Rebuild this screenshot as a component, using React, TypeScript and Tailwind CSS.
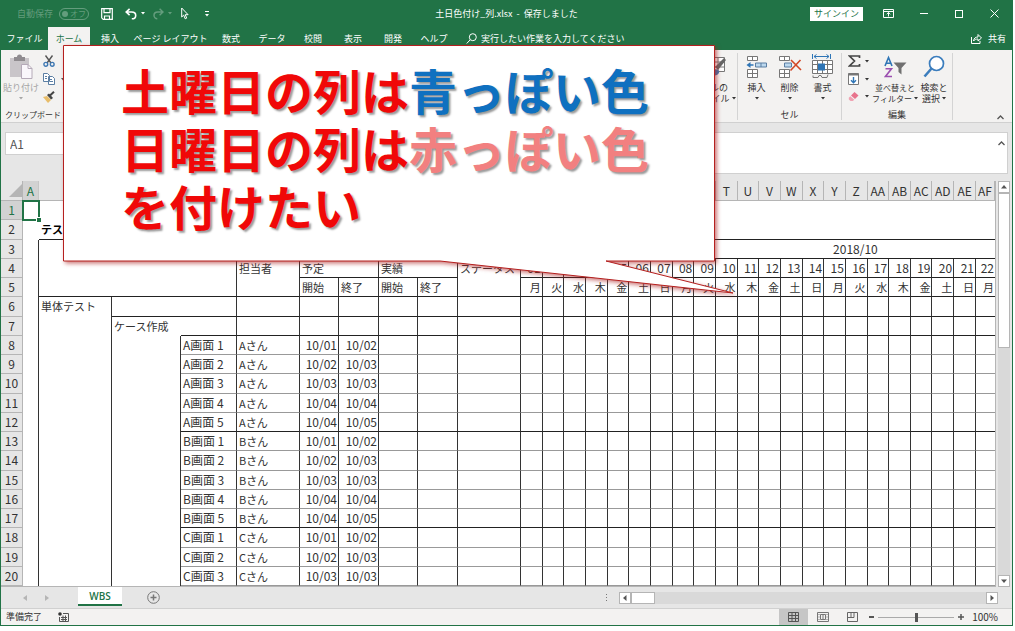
import React from 'react';

const days = Array.from({ length: 22 }, (_, i) => String(i + 1).padStart(2, '0'));
const weekdays = ['月', '火', '水', '木', '金', '土', '日'];
const columnNames = [
  'A', 'B', 'C', 'D', 'E', 'F', 'G', 'H', 'I', 'J', 'K', 'L', 'M', 'N', 'O', 'P',
  'Q', 'R', 'S', 'T', 'U', 'V', 'W', 'X', 'Y', 'Z', 'AA', 'AB', 'AC', 'AD', 'AE', 'AF',
];
// B to S lie behind the speech bubble
const isCovered = (index: number) => index > 0 && index < 19;

const tasks = [
  { name: 'A画面 1', owner: 'Aさん', start: '10/01', end: '10/02' },
  { name: 'A画面 2', owner: 'Aさん', start: '10/02', end: '10/03' },
  { name: 'A画面 3', owner: 'Aさん', start: '10/03', end: '10/03' },
  { name: 'A画面 4', owner: 'Aさん', start: '10/04', end: '10/04' },
  { name: 'A画面 5', owner: 'Aさん', start: '10/04', end: '10/05' },
  { name: 'B画面 1', owner: 'Bさん', start: '10/01', end: '10/02' },
  { name: 'B画面 2', owner: 'Bさん', start: '10/02', end: '10/03' },
  { name: 'B画面 3', owner: 'Bさん', start: '10/03', end: '10/03' },
  { name: 'B画面 4', owner: 'Bさん', start: '10/04', end: '10/04' },
  { name: 'B画面 5', owner: 'Bさん', start: '10/04', end: '10/05' },
  { name: 'C画面 1', owner: 'Cさん', start: '10/01', end: '10/02' },
  { name: 'C画面 2', owner: 'Cさん', start: '10/02', end: '10/03' },
  { name: 'C画面 3', owner: 'Cさん', start: '10/03', end: '10/03' },
];

const tabs = [
  { label: 'ファイル', width: 'w-[47px]' },
  { label: 'ホーム', width: 'w-[42px]', active: true },
  { label: '挿入', width: 'w-[40px]' },
  { label: 'ページ レイアウト', width: 'w-[81px]' },
  { label: '数式', width: 'w-[40px]' },
  { label: 'データ', width: 'w-[42px]' },
  { label: '校閲', width: 'w-[40px]' },
  { label: '表示', width: 'w-[40px]' },
  { label: '開発', width: 'w-[40px]' },
  { label: 'ヘルプ', width: 'w-[42px]' },
];

const Caret: React.FC<{ className?: string }> = ({ className = '' }) => (
  <svg width="4" height="3" viewBox="0 0 4 3" className={`shrink-0 ${className}`} fill="currentColor">
    <path d="M0 0h4L2 2.500z" />
  </svg>
);

const TitleBar: React.FC = () => (
  <header className="flex h-[27px] shrink-0 items-center text-white">
    <div className="flex flex-1 items-center">
      <label className="ml-4 flex items-center gap-1.5 text-white/30">
        自動保存
        <button type="button" role="switch" aria-checked="false" className="flex h-3 w-[30px] shrink-0 items-center gap-0.5 rounded-full border border-white/30 pl-0.5 text-[8px] leading-none whitespace-nowrap">
          <span className="size-1.5 shrink-0 rounded-full bg-white/30" />
          オフ
        </button>
      </label>
      <button type="button" aria-label="上書き保存" className="ml-3">
        <svg width="12" height="12" viewBox="0 0 12 12" fill="none" stroke="white" strokeWidth="1.2">
          <path d="M.7.7h10.6v10.6H2.2L.7 9.8z" />
          <path d="M3 .7v4h6v-4M3.5 11.3V8h5v3.3" />
        </svg>
      </button>
      <button type="button" aria-label="元に戻す" className="ml-3 flex items-center gap-1">
        <svg width="12" height="12" viewBox="0 0 12 12" fill="none" stroke="white" strokeWidth="1.6">
          <path d="M4.6.8L1.2 4l3.4 3.2M1.5 4h5.2c2.3 0 4 1.400 4 3.400S9 10.800 6.800 10.800" />
        </svg>
        <Caret />
      </button>
      <button type="button" aria-label="やり直し" className="ml-2 flex items-center gap-1 text-white/30">
        <svg width="11" height="12" viewBox="0 0 11 12" fill="none" stroke="currentColor" strokeWidth="1.5">
          <path d="M6.600.8L10 4 6.600 7.200M9.500 4H4.800C2.500 4 1 5.500 1 7.300s1.500 3.500 3.300 3.500" />
        </svg>
        <Caret />
      </button>
      <button type="button" aria-label="オブジェクトの選択" className="ml-[9px]">
        <svg width="8" height="13" viewBox="0 0 8 13" fill="none" stroke="white">
          <path d="M.7 1v9l2-1.900 1.500 3.700 1.500-.7-1.500-3.400h2.900z" />
        </svg>
      </button>
      <button type="button" aria-label="クイック アクセス ツール バーのユーザー設定" className="ml-4 flex flex-col items-center gap-0.5">
        <span className="h-px w-1 bg-white" />
        <Caret />
      </button>
    </div>
    <h1 className="text-[9px]">土日色付け_列.xlsx&nbsp; -&nbsp; 保存しました</h1>
    <div className="flex flex-1 items-center justify-end">
      <button type="button" className="h-3.5 w-[53px] bg-white text-center text-[#217346]">サインイン</button>
      <button type="button" aria-label="リボンの表示オプション" className="ml-5">
        <svg width="11" height="9" viewBox="0 0 11 9" fill="none" stroke="white">
          <path d="M.5.5h10v8H.5zM.5 2.500h10M5.500 7.500v-4M3.700 5.200l1.800-1.700 1.800 1.700" />
        </svg>
      </button>
      <button type="button" aria-label="最小化" className="ml-[26px] h-px w-2 bg-white" />
      <button type="button" aria-label="最大化" className="ml-[27px] size-2 border border-white" />
      <button type="button" aria-label="閉じる" className="mr-[13px] ml-[27px]">
        <svg width="9" height="9" viewBox="0 0 9 9" stroke="white">
          <path d="M.5.5l8 8M8.500.5l-8 8" />
        </svg>
      </button>
    </div>
  </header>
);

const TabRow: React.FC = () => (
  <nav className="flex h-[23px] shrink-0 items-stretch text-white">
    {tabs.map((tab) => (
      <button
        key={tab.label}
        type="button"
        className={`${tab.width} shrink-0 whitespace-nowrap ${tab.active ? 'bg-[#f3f2f1] text-[#217346]' : ''}`}
      >
        {tab.label}
      </button>
    ))}
    <button type="button" className="ml-[11px] flex items-center gap-1">
      <svg width="11" height="11" viewBox="0 0 11 11" fill="none" stroke="white">
        <circle cx="6.800" cy="4.200" r="3.500" />
        <path d="M4.200 6.800L.7 10.500" />
      </svg>
      実行したい作業を入力してください
    </button>
    <button type="button" className="mr-1.5 ml-auto flex items-center gap-1.5">
      <svg width="11" height="11" viewBox="0 0 11 11" fill="none" stroke="white">
        <path d="M.5 4v6.500h8.500V8M2.500 8c.3-2.700 2-4 4.500-4V1.500l3.500 3.500L7 8V6C5 6 3.500 6.500 2.500 8z" />
      </svg>
      共有
    </button>
  </nav>
);

const RibbonButton: React.FC<{ lines: string[]; className: string; children: React.ReactNode }> = ({ lines, className, children }) => (
  <button type="button" className={`flex shrink-0 flex-col items-center whitespace-nowrap leading-[11px] ${className}`}>
    <span className="mb-0.5 flex h-[27px] items-center">{children}</span>
    <span>{lines[0]}</span>
    <span className="flex h-[11px] items-center gap-0.5">
      {lines[1]}
      <Caret />
    </span>
  </button>
);

const Ribbon: React.FC = () => (
  <section className="flex h-[73px] shrink-0 border-b border-[#d0d0d0] bg-[#f3f2f1] pt-[3px] pb-0.5">
    <div className="flex w-[130px] shrink-0 flex-col justify-between">
      <div className="flex">
        <RibbonButton lines={['貼り付け', '']} className="w-10 text-[#a6a6a6]">
          <svg width="24" height="26" viewBox="0 0 24 26">
            <path d="M1 4h19v19H1z" fill="#c9c5c9" />
            <path d="M5 3h3a2.500 2.500 0 015 0h3v4H5z" fill="#8f8b8f" />
            <path d="M12.500 10.500h6.500l4 4v10H12.500z" fill="#faf7fb" stroke="#b5aab8" />
            <path d="M19 10.500v4h4" fill="none" stroke="#b5aab8" />
          </svg>
        </RibbonButton>
        <div className="ml-0.5 flex flex-col gap-1.5 pt-0.5">
          <button type="button" aria-label="切り取り">
            <svg width="12" height="12" viewBox="0 0 12 12" fill="none" strokeWidth="1.400">
              <path d="M2.500.5L8 8M9.500.5L4 8" stroke="#555" />
              <circle cx="2.800" cy="9.300" r="1.900" stroke="#3e78b3" />
              <circle cx="9.200" cy="9.300" r="1.900" stroke="#3e78b3" />
            </svg>
          </button>
          <button type="button" aria-label="コピー" className="flex items-center gap-1.5 text-[#555]">
            <svg width="12" height="12" viewBox="0 0 12 12" fill="#fff" stroke="#5b7ea3">
              <path d="M.5.5h4l2 2v6h-6zM5.500 3.500h4l2 2v6h-6z" />
              <path d="M2 3.500h2M2 5.500h2M7 6.500h2M7 8.500h3" />
            </svg>
            <Caret />
          </button>
          <button type="button" aria-label="書式のコピー/貼り付け">
            <svg width="12" height="12" viewBox="0 0 12 12">
              <path d="M0 6l4-1 4 4-3 3z" fill="#e8bd6a" />
              <path d="M4 4l2-1.500L10 7 8 8.500z" fill="#444" />
              <path d="M7 4.500L11 .8" stroke="#444" strokeWidth="2" />
            </svg>
          </button>
        </div>
      </div>
      <span className="pl-1 text-[8px] leading-[11px]">クリップボード</span>
    </div>

    <div className="flex-1" />

    <div className="flex w-[46px] shrink-0 justify-center border-r border-[#d4d4d4]">
      <RibbonButton lines={['セルの', 'スタイル']} className="w-[46px]">
        <svg width="24" height="24" viewBox="0 0 24 24">
          <path d="M1.500 2.500h20v14h-20zM1.500 7h20M1.500 12h20M8 2.500v14M15 2.500v14" fill="#fff" stroke="#777" />
          <path d="M12 12l9-9 2 2-8 10z" fill="#666" />
          <path d="M9 21c0-5 3-8 6-6s0 6-6 6z" fill="#3e78b3" />
        </svg>
      </RibbonButton>
    </div>

    <div className="flex w-[104px] shrink-0 flex-col justify-between border-r border-[#d4d4d4]">
      <div className="flex justify-center">
        <RibbonButton lines={['挿入', '']} className="w-[33px]">
          <svg width="22" height="24" viewBox="0 0 22 24" fill="#fff" stroke="#777">
            <path d="M1.500 1.500h10v4h-10zM6.500 1.500v4M1.500 14.500h10v8h-10zM1.500 18.500h10M6.500 14.500v8" />
            <path d="M9.500 8h11v4h-11zM15 8v4" fill="#bcd8ee" stroke="#5b7ea3" />
            <path d="M7.500 10H2" stroke="#2e75b6" strokeWidth="1.500" />
            <path d="M4.500 7v6L.5 10z" fill="#2e75b6" stroke="none" />
          </svg>
        </RibbonButton>
        <RibbonButton lines={['削除', '']} className="w-[33px]">
          <svg width="24" height="24" viewBox="0 0 24 24" fill="#fff" stroke="#777">
            <path d="M1.500 1.500h10v4h-10zM6.500 1.500v4M1.500 14.500h10v8h-10zM1.500 18.500h10M6.500 14.500v8" />
            <path d="M6.500 8h7v4h-7z" fill="#bcd8ee" stroke="#5b7ea3" />
            <path d="M13 5l10 10M22.500 5L12.500 15.500" stroke="#d24726" strokeWidth="1.600" />
          </svg>
        </RibbonButton>
        <RibbonButton lines={['書式', '']} className="w-[33px]">
          <svg width="23" height="25" viewBox="0 0 23 25" fill="none" stroke="#777">
            <path d="M1.500 6.500h20v13h-20zM1.500 10.500h20M1.500 15.500h20M6.500 6.500v13M11.500 6.500v13M16.500 6.500v13" fill="#fff" />
            <path d="M7 9.500h7v7H7z" fill="#2e75b6" stroke="none" />
            <path d="M2 21.500v2h5l1-2h2l1 2h5l1-3" />
            <path d="M1.500 0v5M19.500 0v5M3 2.500h15" stroke="#2e75b6" />
            <path d="M5.500.5L3 2.500l2.500 2M15.500.5l2.500 2-2.500 2" stroke="#2e75b6" />
          </svg>
        </RibbonButton>
      </div>
      <span className="text-center leading-[11px]">セル</span>
    </div>

    <div className="flex w-[111px] shrink-0 flex-col justify-between border-r border-[#d4d4d4]">
      <div className="flex pl-1.5">
        <div className="flex w-[22px] shrink-0 flex-col gap-1.5 pt-0.5">
          <button type="button" aria-label="オート SUM" className="flex items-center gap-1">
            <svg width="13" height="12" viewBox="0 0 13 12" fill="none" stroke="#444" strokeWidth="1.700">
              <path d="M11.500 3V1H1.500l5 5-5 5h10V9" />
            </svg>
            <Caret />
          </button>
          <button type="button" aria-label="フィル" className="flex items-center gap-1.5">
            <svg width="11" height="12" viewBox="0 0 11 12" fill="#fff" stroke="#777">
              <path d="M.5.5h10v11H.5z" />
              <path d="M.5 1.500h10" strokeWidth="2" />
              <path d="M5.500 4v5.500M3 7.200l2.500 2.500L8 7.200" fill="none" stroke="#2e75b6" strokeWidth="1.400" />
            </svg>
            <Caret />
          </button>
          <button type="button" aria-label="クリア" className="flex items-center gap-1.5">
            <svg width="11" height="11" viewBox="0 0 11 11">
              <path d="M6.500 1L10.500 4.500 7 8 3 4.500z" fill="#e8738c" />
              <path d="M2.300 5.200l4 3.500L4.800 10H2.500L.8 8.500V6.700z" fill="#f0a3b3" />
            </svg>
            <Caret />
          </button>
        </div>
        <RibbonButton lines={['並べ替えと', 'フィルター']} className="w-[50px] text-[8px]">
          <svg width="23" height="24" viewBox="0 0 23 24" fill="none">
            <path d="M1 11L4.500 2.500 8 11M2.200 8.300h4.600" stroke="#2e75b6" strokeWidth="1.600" />
            <path d="M1.500 13.800h6L1.500 21.500h6.500" stroke="#9b4fb0" strokeWidth="1.600" />
            <path d="M9.500 7.500H22.500L17.500 13v6.500L14.500 17v-4z" fill="#707070" />
          </svg>
        </RibbonButton>
        <RibbonButton lines={['検索と', '選択']} className="w-[28px]">
          <svg width="22" height="24" viewBox="0 0 22 24" fill="#fff" stroke="#3b7dbd">
            <circle cx="13.500" cy="8.500" r="7" strokeWidth="1.700" />
            <path d="M8.500 13.500L1.500 21.500" strokeWidth="2.600" />
          </svg>
        </RibbonButton>
      </div>
      <span className="text-center leading-[11px]">編集</span>
    </div>

    <div className="flex w-[59px] shrink-0 items-end justify-end pr-2">
      <button type="button" aria-label="リボンを折りたたむ">
        <svg width="7" height="5" viewBox="0 0 7 5" fill="none" stroke="#555" strokeWidth="1.300">
          <path d="M.5 4l3-3 3 3" />
        </svg>
      </button>
    </div>
  </section>
);

const FormulaBar: React.FC = () => (
  <div className="flex shrink-0 items-start gap-2 pt-[9px] pr-1 pb-[7px] pl-1">
    <input
      aria-label="名前ボックス"
      defaultValue="A1"
      className="h-[23px] w-[110px] border border-[#d0d0d0] bg-white px-1 text-[12px] text-[#555]"
    />
    <div className="flex h-[42px] flex-1 items-start border border-[#d0d0d0] bg-white">
      <input aria-label="数式バー" className="h-5 flex-1 bg-transparent px-1" />
      <button type="button" aria-label="数式バーの展開" className="mt-2 mr-0.5">
        <svg width="7" height="5" viewBox="0 0 7 5" fill="none" stroke="#555" strokeWidth="1.300">
          <path d="M.5 4l3-3 3 3" />
        </svg>
      </button>
    </div>
  </div>
);

const line = 'border-r border-[#333]';
const solid = 'border-b border-b-[#222]';
const hair = 'border-b border-b-[#999]';

const RowHead: React.FC<{ n: number }> = ({ n }) => (
  <th
    scope="row"
    className={`border-r border-b border-[#b5b5b5] text-center text-[12px] font-normal ${n === 1 ? 'bg-[#d2d2d2] text-[#217346]' : 'bg-[#e6e6e6]'}`}
  >
    {n}
  </th>
);

const EmptyCells: React.FC<{ count: number; className: string }> = ({ count, className }) => (
  <>
    {Array.from({ length: count }, (_, i) => (
      <td key={i} className={className} />
    ))}
  </>
);

const Sheet: React.FC = () => (
  <div className="min-w-0 flex-1 overflow-hidden border-r border-b border-[#b5b5b5]">
    <table className="h-full w-full table-fixed border-separate border-spacing-0 bg-white text-[11px] leading-4 whitespace-nowrap text-[#333]">
      <colgroup>
        <col className="w-[22px]" />
        <col className="w-[16px]" />
        <col className="w-[73px]" />
        <col className="w-[69px]" />
        <col className="w-[56px]" />
        <col className="w-[63px]" />
        <col className="w-[39px]" />
        <col className="w-[40px]" />
        <col className="w-[39px]" />
        <col className="w-[40px]" />
        <col className="w-[63px]" />
        {days.slice(1).map((day) => (
          <col key={day} />
        ))}
        <col className="w-[19px]" />
      </colgroup>
      <thead>
        <tr className="bg-[#e6e6e6] text-[12px]">
          <th className="h-5 border-r border-b border-[#b5b5b5]">
            <svg width="13" height="13" viewBox="0 0 13 13" className="ml-auto" fill="#b5b5b5">
              <path d="M13 0v13H0z" />
            </svg>
          </th>
          {columnNames.map((name, index) => (
            <th
              key={name}
              scope="col"
              className={`border-r border-b font-normal ${name === 'A' ? 'border-r-[#c6c6c6] border-b-[#217346] bg-[#d2d2d2] text-[#217346]' : 'border-[#b5b5b5]'}`}
            >
              {isCovered(index) ? null : name}
            </th>
          ))}
        </tr>
      </thead>
      <tbody>
        <tr>
          <RowHead n={1} />
          <td className="relative outline-2 -outline-offset-1 outline-[#217346]">
            <span className="absolute -right-0.5 -bottom-0.5 size-1 bg-[#217346] ring-1 ring-white" />
          </td>
          <td colSpan={31} />
        </tr>
        <tr>
          <RowHead n={2} />
          <td />
          <td colSpan={31} className={`pl-0.5 font-bold text-black ${solid}`}>テスト</td>
        </tr>
        <tr>
          <RowHead n={3} />
          <td className={line} />
          <td colSpan={3} rowSpan={3} className={`${line} ${solid}`} />
          <td colSpan={6} className={`${line} ${solid}`} />
          <td colSpan={9} className={solid} />
          <td colSpan={13} className={`text-center text-[12px] ${solid}`}>2018/10</td>
        </tr>
        <tr>
          <RowHead n={4} />
          <td className={line} />
          <td rowSpan={2} className={`pt-px pl-0.5 align-top ${line} ${solid}`}>担当者</td>
          <td colSpan={2} className={`pl-0.5 ${line} ${solid}`}>予定</td>
          <td colSpan={2} className={`pl-0.5 ${line} ${solid}`}>実績</td>
          <td rowSpan={2} className={`pt-px pl-0.5 align-top ${line} ${solid}`}>ステータス</td>
          {days.map((day) => (
            <td key={day} className={`pr-px text-right text-[12px] last:border-r-0 ${line} ${solid}`}>{day}</td>
          ))}
        </tr>
        <tr>
          <RowHead n={5} />
          <td className={line} />
          {['開始', '終了', '開始', '終了'].map((text, i) => (
            <td key={i} className={`pl-0.5 ${line} ${solid}`}>{text}</td>
          ))}
          {days.map((day, i) => (
            <td key={day} className={`pr-px text-right last:border-r-0 ${line} ${solid}`}>{weekdays[i % 7]}</td>
          ))}
        </tr>
        <tr>
          <RowHead n={6} />
          <td className={line} />
          <td rowSpan={15} className={`pt-px pl-0.5 align-top ${line}`}>単体テスト</td>
          <td colSpan={2} className={`${line} ${solid}`} />
          <EmptyCells count={28} className={`last:border-r-0 ${line} ${solid}`} />
        </tr>
        <tr>
          <RowHead n={7} />
          <td className={line} />
          <td className="pl-0.5">ケース作成</td>
          <td className={`${line} ${solid}`} />
          <EmptyCells count={28} className={`last:border-r-0 ${line} ${solid}`} />
        </tr>
        {tasks.map((task, index) => {
          const rule = index % 5 === 4 ? solid : hair;
          return (
            <tr key={task.name}>
              <RowHead n={index + 8} />
              <td className={line} />
              {index === 0 && <td rowSpan={13} className={line} />}
              <td className={`pl-0.5 text-[12px] ${line} ${rule}`}>{task.name}</td>
              <td className={`pl-0.5 ${line} ${rule}`}>{task.owner}</td>
              <td className={`pr-px text-right text-[12px] ${line} ${rule}`}>{task.start}</td>
              <td className={`pr-px text-right text-[12px] ${line} ${rule}`}>{task.end}</td>
              <EmptyCells count={25} className={`last:border-r-0 ${line} ${rule}`} />
            </tr>
          );
        })}
      </tbody>
    </table>
  </div>
);

const ScrollButton: React.FC<{ label: string; path: string }> = ({ label, path }) => (
  <button type="button" aria-label={label} className="flex size-3 shrink-0 items-center justify-center border border-[#b5b5b5] bg-white">
    <svg width="6" height="6" viewBox="0 0 6 6" fill="#555">
      <path d={path} />
    </svg>
  </button>
);

const SheetTabs: React.FC = () => (
  <div className="flex h-[21px] shrink-0 items-center pr-[14px]">
    <div className="flex w-[77px] justify-center gap-[18px] pr-2 text-[#b5b5b5]">
      <button type="button" aria-label="前のシート">
        <svg width="4" height="6" viewBox="0 0 4 6" fill="currentColor"><path d="M4 0v6L0 3z" /></svg>
      </button>
      <button type="button" aria-label="次のシート">
        <svg width="4" height="6" viewBox="0 0 4 6" fill="currentColor"><path d="M0 0v6l4-3z" /></svg>
      </button>
    </div>
    <button type="button" className="h-[19px] w-11 self-start border-b-2 border-[#217346] bg-white font-['Open_Sans',sans-serif] text-[10px] font-semibold text-[#217346]">
      WBS
    </button>
    <button type="button" aria-label="新しいシート" className="ml-[25px]">
      <svg width="13" height="13" viewBox="0 0 13 13" fill="none" stroke="#777">
        <circle cx="6.500" cy="6.500" r="5.800" />
        <path d="M6.500 3.500v6M3.500 6.500h6" strokeWidth="1.500" />
      </svg>
    </button>
    <div className="flex-1" />
    <div className="mr-3 flex flex-col gap-0.5">
      <span className="size-px bg-[#777]" />
      <span className="size-px bg-[#777]" />
      <span className="size-px bg-[#777]" />
    </div>
    <div className="flex w-[38%] bg-[#d9d9d9]">
      <ScrollButton label="左へスクロール" path="M4.500 0v6L1 3z" />
      <div className="h-3 w-6 border border-[#b5b5b5] bg-white" />
      <div className="flex-1" />
      <ScrollButton label="右へスクロール" path="M1.500 0v6L5 3z" />
    </div>
  </div>
);

const StatusBar: React.FC = () => (
  <footer className="flex h-[17px] shrink-0 items-center border-t border-[#d0d0d0] bg-[#f3f2f1]">
    <span className="ml-[5px]">準備完了</span>
    <button type="button" aria-label="マクロの記録" className="ml-4">
      <svg width="11" height="10" viewBox="0 0 11 10" fill="none" stroke="#555">
        <path d="M5 1.500h5.500v8h-9V5M3 5.500h6M3 7.500h6M5 3.500v6M7.500 3.500v6" />
        <circle cx="2" cy="2" r="1.800" fill="#333" stroke="none" />
      </svg>
    </button>
    <div className="ml-auto flex self-stretch">
      <button type="button" aria-label="標準" className="flex w-[29px] items-center justify-center bg-[#c6c6c6]">
        <svg width="11" height="10" viewBox="0 0 11 10" fill="none" stroke="#555">
          <path d="M.5.5h10v9H.5zM.5 3.500h10M.5 6.500h10M4 .5v9M7.500.5v9" />
        </svg>
      </button>
      <button type="button" aria-label="ページ レイアウト表示" className="flex w-[30px] items-center justify-center">
        <svg width="12" height="10" viewBox="0 0 12 10" fill="none" stroke="#777">
          <path d="M.5.5h11v9H.5zM3.500 2.500h5v5h-5zM6 3v4M1.500 2.500h1M1.500 5h1M1.500 7.500h1M9.500 2.500h1M9.500 5h1M9.500 7.500h1" />
        </svg>
      </button>
      <button type="button" aria-label="改ページ プレビュー" className="flex w-[29px] items-center justify-center">
        <svg width="11" height="10" viewBox="0 0 11 10" fill="none" stroke="#666">
          <path d="M.5.5h10v9H.5zM.5 5.500h6.500v-5M4 .5v5" />
        </svg>
      </button>
    </div>
    <button type="button" aria-label="縮小" className="ml-0.5 h-0.5 w-[5px] bg-[#555]" />
    <input
      type="range"
      aria-label="ズーム"
      min="0"
      max="100"
      defaultValue="50"
      className="mx-1 h-3 w-[76px] appearance-none bg-transparent [&::-webkit-slider-runnable-track]:h-px [&::-webkit-slider-runnable-track]:bg-[#aaa] [&::-webkit-slider-thumb]:-mt-1 [&::-webkit-slider-thumb]:h-[9px] [&::-webkit-slider-thumb]:w-[3px] [&::-webkit-slider-thumb]:appearance-none [&::-webkit-slider-thumb]:bg-[#555]"
    />
    <button type="button" aria-label="拡大">
      <svg width="6" height="6" viewBox="0 0 6 6" stroke="#555" strokeWidth="1.500"><path d="M3 0v6M0 3h6" /></svg>
    </button>
    <span className="mr-[14px] ml-2 text-[10px]">100%</span>
  </footer>
);

// speech bubble laid over the workbook, its tail ends on the day columns
const Callout: React.FC = () => (
  <div className="absolute top-[45px] left-[63px] h-[250px] w-[672px]">
    <svg width="672" height="250" viewBox="0 0 672 250" className="absolute inset-0 overflow-visible drop-shadow-[2px_2px_2px_rgba(170,30,30,0.6)]">
      <path d="M.5.5h651v215.500H543L670 248 377 216H.5z" fill="#fff" stroke="#b5201f" />
    </svg>
    <p className="relative pt-[15px] pl-[58px] text-[48px] leading-[58px] font-bold whitespace-nowrap text-[#f00808] [text-shadow:2px_2px_2px_rgba(0,0,0,0.4)]">
      土曜日の列は<span className="text-[#0f70c0]">青っぽい色</span>
      <br />
      日曜日の列は<span className="text-[#f28080]">赤っぽい色</span>
      <br />
      を付けたい
    </p>
  </div>
);

export default function App() {
  return (
    <div className="relative h-screen min-h-[500px] overflow-hidden bg-white pr-0.5 pb-[5px] font-['Noto_Sans_CJK_JP',sans-serif] text-[9px] leading-3 text-[#333]">
      <div className="flex h-full flex-col border-x border-b border-[#217346] bg-[#e6e6e6]">
        <div className="bg-[#217346]">
          <TitleBar />
          <TabRow />
        </div>
        <Ribbon />
        <FormulaBar />
        <div className="flex min-h-0 flex-1 gap-0.5 pr-0.5">
          <Sheet />
          <div className="flex w-3 shrink-0 flex-col bg-[#d9d9d9]">
            <ScrollButton label="上へスクロール" path="M0 4.500h6L3 1z" />
            <div className="h-[155px] border border-[#b5b5b5] bg-white" />
            <div className="flex-1" />
            <ScrollButton label="下へスクロール" path="M0 1.500h6L3 5z" />
          </div>
        </div>
        <SheetTabs />
        <StatusBar />
      </div>
      <Callout />
    </div>
  );
}
